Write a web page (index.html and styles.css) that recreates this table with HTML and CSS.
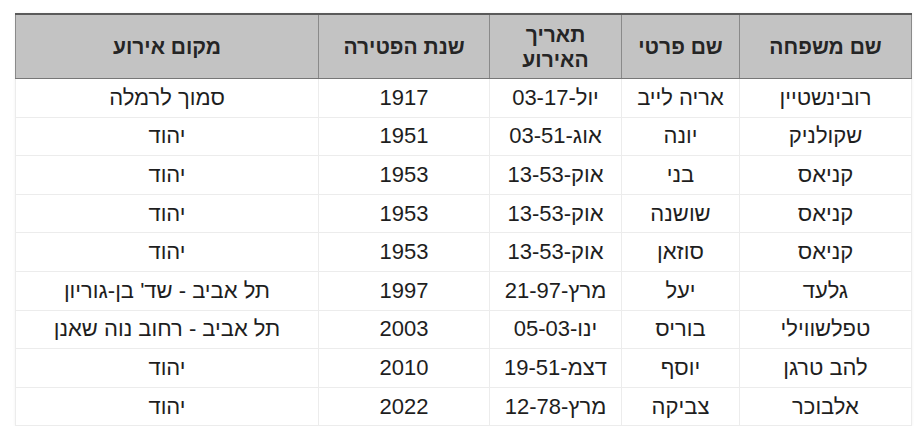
FILE: index.html
```html
<!DOCTYPE html>
<html lang="he" dir="rtl">
<head>
<meta charset="utf-8">
<link rel="stylesheet" href="styles.css">
</head>
<body>
<div class="wrap">
<table class="grid">
<colgroup>
<col class="c1"><col class="c2"><col class="c3"><col class="c4"><col class="c5">
</colgroup>
<thead>
<tr><th>שם משפחה</th><th>שם פרטי</th><th>תאריך<br>האירוע</th><th>שנת הפטירה</th><th>מקום אירוע</th></tr>
</thead>
<tbody>
<tr><td>רובינשטיין</td><td>אריה לייב</td><td>יול-03-17</td><td>1917</td><td>סמוך לרמלה</td></tr>
<tr><td>שקולניק</td><td>יונה</td><td>אוג-03-51</td><td>1951</td><td>יהוד</td></tr>
<tr><td>קניאס</td><td>בני</td><td>אוק-13-53</td><td>1953</td><td>יהוד</td></tr>
<tr><td>קניאס</td><td>שושנה</td><td>אוק-13-53</td><td>1953</td><td>יהוד</td></tr>
<tr><td>קניאס</td><td>סוזאן</td><td>אוק-13-53</td><td>1953</td><td>יהוד</td></tr>
<tr><td>גלעד</td><td>יעל</td><td>מרץ-21-97</td><td>1997</td><td>תל אביב - שד' בן-גוריון</td></tr>
<tr><td>טפלשווילי</td><td>בוריס</td><td>ינו-05-03</td><td>2003</td><td>תל אביב - רחוב נוה שאנן</td></tr>
<tr><td>להב טרגן</td><td>יוסף</td><td>דצמ-19-51</td><td>2010</td><td>יהוד</td></tr>
<tr><td>אלבוכר</td><td>צביקה</td><td>מרץ-12-78</td><td>2022</td><td>יהוד</td></tr>
</tbody>
</table>
</div>
</body>
</html>
```

FILE: styles.css
```css
html, body {
  margin: 0;
  padding: 0;
  background: #ffffff;
}
.wrap {
  padding: 13px 12px 0 16px;
}
.grid {
  width: 896px;
  border-collapse: collapse;
  table-layout: fixed;
  font-family: "Liberation Sans", Arial, sans-serif;
  color: #1e1e1e;
  box-shadow: 0 0 3px rgba(0,0,0,0.06);
}
.c1 { width: 172px; }
.c2 { width: 118px; }
.c3 { width: 132px; }
.c4 { width: 171px; }
.c5 { width: 303px; }
.grid th {
  background: #c3c3c3;
  font-weight: bold;
  font-size: 21px;
  line-height: 25px;
  height: 63px;
  padding: 0 4px;
  text-align: center;
  border-top: 2px solid #5a5a5a;
  border-bottom: 1px solid #777;
  border-left: 1px solid #8a8a8a;
  border-right: 1px solid #8a8a8a;
  color: #252525;
}
.grid td {
  font-size: 22px;
  height: 37.6px;
  padding: 0 4px;
  text-align: center;
  border: 1px solid #ececec;
  white-space: nowrap;
}
```
